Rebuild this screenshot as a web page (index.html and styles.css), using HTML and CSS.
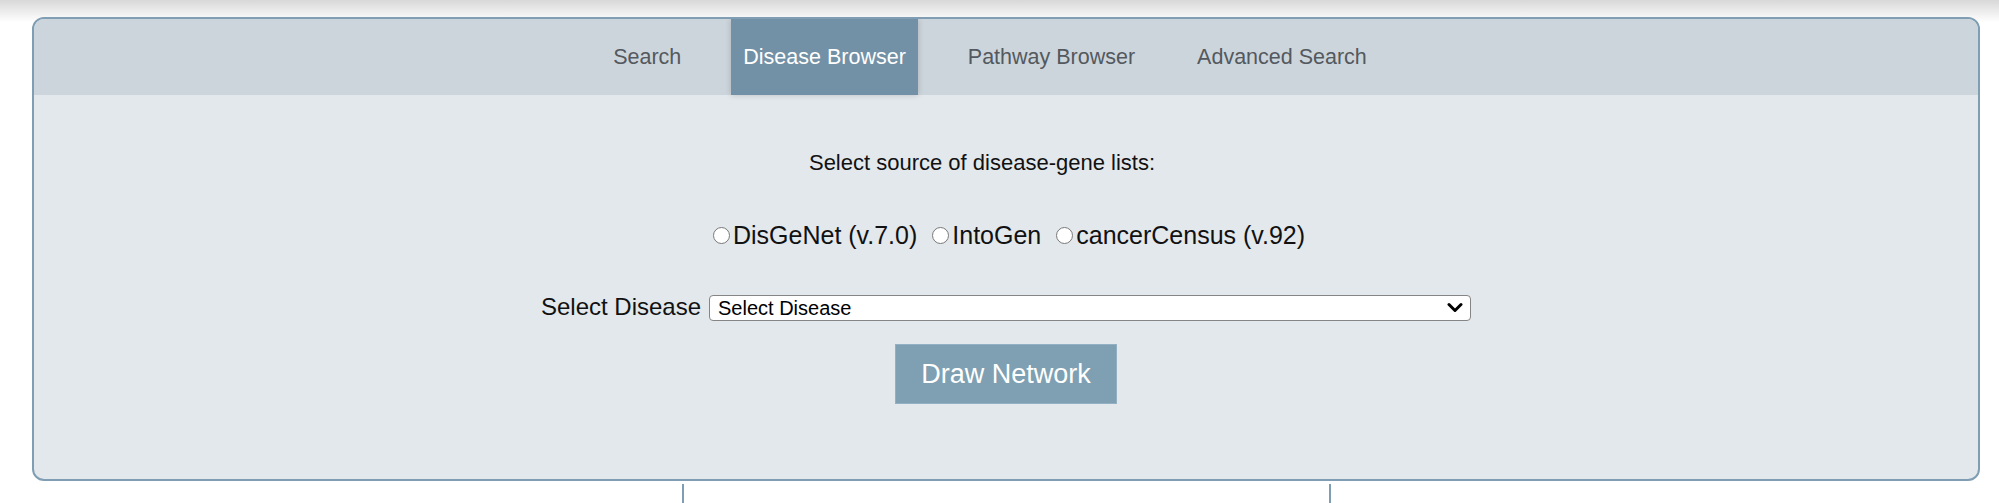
FILE: index.html
```html
<!DOCTYPE html>
<html lang="en">
<head>
    <meta charset="UTF-8">
    <meta name="viewport" content="width=device-width, initial-scale=1.0">
    <link rel="stylesheet" href="styles.css">
    <title>Disease Browser</title>
</head>
<body>
    <div id="panel">
        <nav id="tabs">
            <a class="tab" href="#">Search</a>
            <a class="tab active" href="#">Disease Browser</a>
            <a class="tab" href="#">Pathway Browser</a>
            <a class="tab" href="#">Advanced Search</a>
        </nav>

        <div id="diseaseTab" class="tab-content">
            <p class="source-title">Select source of disease-gene lists:</p>
            <div class="sources">
                <label class="source"><input type="radio" name="source" value="disgenet">DisGeNet (v.7.0)</label>
                <label class="source"><input type="radio" name="source" value="intogen">IntoGen</label>
                <label class="source"><input type="radio" name="source" value="census">cancerCensus (v.92)</label>
            </div>
            <div class="disease-row">
                <label for="diseaseSelect">Select Disease</label>
                <span class="select-wrap">
                    <select id="diseaseSelect">
                        <option>Select Disease</option>
                    </select>
                    <svg class="chevron" width="16" height="11" viewBox="0 0 16 11">
                        <path d="M2 2.5 L8 8.5 L14 2.5" fill="none" stroke="#000" stroke-width="3" stroke-linecap="round" stroke-linejoin="round"/>
                    </svg>
                </span>
            </div>
            <button id="drawBtn">Draw Network</button>
        </div>
    </div>

    <div id="below">
        <span class="rule"></span>
        <span class="rule"></span>
    </div>
</body>
</html>
```

FILE: styles.css
```css
body {
    font-family: 'Liberation Sans', Arial, sans-serif;
    margin: 0;
    padding: 17px 19px 0 32px;
    background: #fff linear-gradient(#d8d8d8, #fff 22px) no-repeat;
    color: #111;
}

#panel {
    border: 2px solid #7f9eb3;
    border-radius: 12px;
    overflow: hidden;
    background-color: #e3e8ec;
}

#tabs {
    display: flex;
    justify-content: center;
    gap: 38px;
    padding-right: 32px;
    height: 76px;
    background-color: #cdd5dc;
}

.tab {
    padding: 0 12px;
    font-size: 21.5px;
    line-height: 76px;
    color: #53595e;
    text-decoration: none;
}

.tab.active {
    background-color: #7391a6;
    color: #fff;
    box-shadow: 0 0 6px rgba(0, 0, 0, 0.18);
}

.tab-content {
    text-align: center;
    padding: 53px 0 75px;
}

.source-title {
    margin: 0;
    padding-right: 48px;
    font-size: 22px;
    line-height: 30px;
}

.sources {
    display: flex;
    justify-content: center;
    align-items: center;
    gap: 15px;
    margin-top: 42px;
    padding-left: 6px;
    height: 30px;
    font-size: 25px;
}

.source {
    display: inline-flex;
    align-items: center;
    gap: 3px;
}

.source input {
    width: 17px;
    height: 17px;
    margin: 0;
}

.disease-row {
    display: flex;
    justify-content: center;
    align-items: center;
    gap: 8px;
    margin-top: 44px;
    font-size: 24px;
    line-height: 26px;
}

.select-wrap {
    position: relative;
    display: inline-block;
    height: 26px;
}

#diseaseSelect {
    appearance: none;
    -webkit-appearance: none;
    width: 762px;
    height: 26px;
    padding: 0 0 0 8px;
    border: 1px solid #858585;
    border-radius: 4px;
    background-color: #fff;
    font-family: 'Liberation Sans', Arial, sans-serif;
    font-size: 20px;
    color: #000;
}

.chevron {
    position: absolute;
    right: 8px;
    top: 8px;
    pointer-events: none;
}

#drawBtn {
    margin-top: 24px;
    height: 60px;
    padding: 0 25px;
    border: 1px solid #93b0c2;
    background-color: #7f9fb2;
    color: #fff;
    font-family: 'Liberation Sans', Arial, sans-serif;
    font-size: 27px;
    cursor: pointer;
}

#below {
    display: flex;
    gap: 645px;
    padding: 3px 0 0 650px;
    height: 19px;
}

.rule {
    width: 2px;
    background-color: #7f9eb3;
}
```
